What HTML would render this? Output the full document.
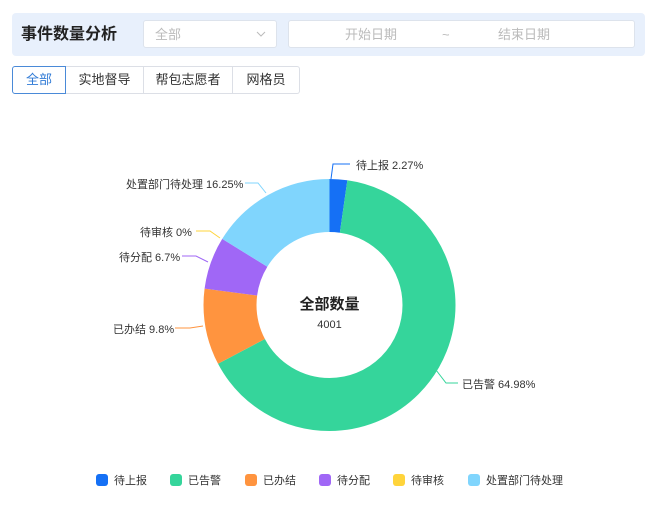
<!DOCTYPE html>
<html><head><meta charset="utf-8"><style>
body{margin:0;width:651px;height:525px;background:#fff;font-family:"Liberation Sans","Noto Sans CJK SC",sans-serif;position:relative;overflow:hidden}
.hdr{position:absolute;left:12px;top:13px;width:633px;height:43px;background:#e8f0fc;border-radius:4px}
.title{position:absolute;left:21px;top:25px;font-size:16px;font-weight:bold;color:#222;line-height:20px}
.sel{position:absolute;left:143px;top:20px;width:134px;height:28px;background:#fff;border:1px solid #dde3ec;border-radius:3px;box-sizing:border-box}
.date{position:absolute;left:288px;top:20px;width:347px;height:28px;background:#fff;border:1px solid #dde3ec;border-radius:3px;box-sizing:border-box}
.ph{position:absolute;font-size:13px;color:#bbb;top:6px;line-height:16px}
.tabs{position:absolute;left:12px;top:66px;height:28px;display:flex}
.tab{height:28px;box-sizing:border-box;border:1px solid #dcdfe6;border-left:none;font-size:13px;color:#333;line-height:26px;text-align:center}
.tab.a{border:1px solid #4a8ad8;color:#2f7ad6;border-radius:3px 0 0 3px}
.tab:last-child{border-radius:0 3px 3px 0}
.lbl{position:absolute;font-size:11px;color:#333;white-space:nowrap}
.leg{position:absolute;top:472px;font-size:11px;color:#333;display:flex;align-items:center}
.leg i{display:inline-block;width:12px;height:12px;border-radius:3px;margin-right:6px}
</style></head><body>
<div class="hdr"></div>
<div class="title">事件数量分析</div>
<div class="sel"><span class="ph" style="left:11px">全部</span>
<svg style="position:absolute;left:112px;top:10px" width="10" height="7"><path d="M1 1 L5 5 L9 1" fill="none" stroke="#bbb" stroke-width="1"/></svg></div>
<div class="date"><span class="ph" style="left:56px">开始日期</span><span class="ph" style="left:153px">~</span><span class="ph" style="left:209px">结束日期</span></div>
<div class="tabs">
<div class="tab a" style="width:54px">全部</div>
<div class="tab" style="width:78px">实地督导</div>
<div class="tab" style="width:89px">帮包志愿者</div>
<div class="tab" style="width:67px">网格员</div>
</div>
<svg width="651" height="525" style="position:absolute;left:0;top:0">
<g transform="rotate(-90 329.5 305)" fill="none" stroke-width="53">
<circle cx="329.5" cy="305" r="99.5" stroke="#1570f5" stroke-dasharray="14.19 625.2" stroke-dashoffset="0"/>
<circle cx="329.5" cy="305" r="99.5" stroke="#35d59b" stroke-dasharray="406.26 625.2" stroke-dashoffset="-14.19"/>
<circle cx="329.5" cy="305" r="99.5" stroke="#ff943f" stroke-dasharray="61.27 625.2" stroke-dashoffset="-420.45"/>
<circle cx="329.5" cy="305" r="99.5" stroke="#a067f6" stroke-dasharray="41.89 625.2" stroke-dashoffset="-481.72"/>
<circle cx="329.5" cy="305" r="99.5" stroke="#80d5fd" stroke-dasharray="101.6 625.2" stroke-dashoffset="-523.61"/>
</g>
<g fill="none" stroke-width="1">
<path d="M331 179 L333 164 L350 164" stroke="#1570f5"/>
<path d="M436 370 L446 383 L458 383" stroke="#35d59b"/>
<path d="M203 326 L190 328 L175 328" stroke="#ff943f"/>
<path d="M208 262 L196 256 L182 256" stroke="#a067f6"/>
<path d="M220 238 L210 231 L196 231" stroke="#ffd43b"/>
<path d="M266 193 L258 183 L245 183" stroke="#80d5fd"/>
</g>
<text x="329.5" y="309" text-anchor="middle" font-size="15" font-weight="bold" fill="#222" font-family="Liberation Sans,Noto Sans CJK SC,sans-serif">全部数量</text>
<text x="329.5" y="328" text-anchor="middle" font-size="11" fill="#333" font-family="Liberation Sans,sans-serif">4001</text>
</svg>
<div class="lbl" style="left:356px;top:157px">待上报 2.27%</div>
<div class="lbl" style="left:462px;top:376px">已告警 64.98%</div>
<div class="lbl" style="left:113px;top:321px">已办结 9.8%</div>
<div class="lbl" style="left:119px;top:249px">待分配 6.7%</div>
<div class="lbl" style="left:140px;top:224px">待审核 0%</div>
<div class="lbl" style="left:126px;top:176px">处置部门待处理 16.25%</div>
<div class="leg" style="left:96px"><i style="background:#1570f5"></i>待上报</div>
<div class="leg" style="left:170px"><i style="background:#35d59b"></i>已告警</div>
<div class="leg" style="left:245px"><i style="background:#ff943f"></i>已办结</div>
<div class="leg" style="left:319px"><i style="background:#a067f6"></i>待分配</div>
<div class="leg" style="left:393px"><i style="background:#ffd43b"></i>待审核</div>
<div class="leg" style="left:468px"><i style="background:#80d5fd"></i>处置部门待处理</div>
</body></html>
